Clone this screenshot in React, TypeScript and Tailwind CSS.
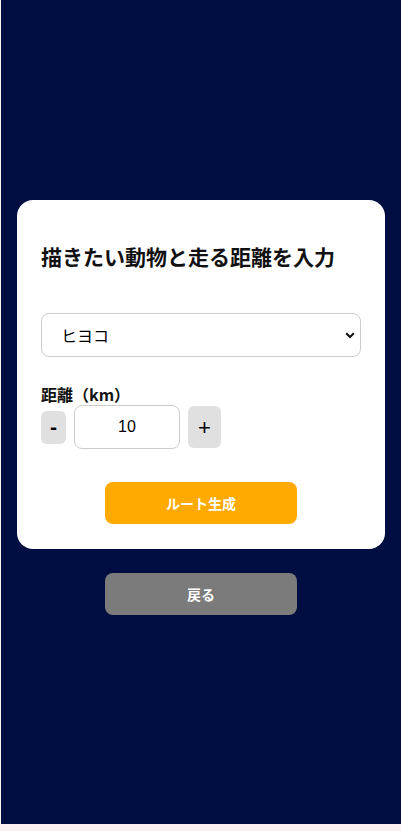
import React, { useState } from "react";

export default function App() {
  const [km, setKm] = useState(10);
  const jp = { fontFamily: '"Noto Sans CJK JP", "Noto Sans", sans-serif' };
  return (
    <div className="h-[831px] w-[401px] bg-[#fbf1f3] pl-px">
      <div className="h-[824px] w-[400px] bg-[#000d40] pt-[200px]" style={jp}>
        <div className="mx-4 rounded-2xl bg-white px-6 pt-[41px] pb-[25px]">
          <h2 className="text-[21px] leading-[30px] font-bold text-[#111]">描きたい動物と走る距離を入力</h2>
          <div className="relative mt-[42px] h-[44px] w-full">
            <select
              className="h-full w-full appearance-none rounded-lg border border-[#cccccc] bg-white pl-[19px] text-[16px] text-black outline-none"
              style={jp}
              defaultValue="ヒヨコ"
            >
              <option>ヒヨコ</option>
              <option>ネコ</option>
              <option>イヌ</option>
            </select>
            <svg
              className="pointer-events-none absolute right-[6px] top-[19px]"
              width="10"
              height="7"
              viewBox="0 0 10 7"
            >
              <path d="M1.2 1.3 L5 5 L8.8 1.3" fill="none" stroke="#111" strokeWidth="2" />
            </svg>
          </div>
          <label className="mt-[27px] block text-[16px] leading-[20px] font-bold text-[#111]">距離（km）</label>
          <div className="flex h-[46px] items-center gap-2">
            <button
              className="flex h-[33px] w-[25px] items-center justify-center rounded-md bg-[#e0e0e0] text-[21px] font-bold text-black"
              style={{ fontFamily: '"Liberation Sans", Arial, sans-serif' }}
              onClick={() => setKm(Math.max(1, km - 1))}
            >
              -
            </button>
            <input
              className="h-[44px] w-[106px] rounded-lg border border-[#cccccc] bg-white text-center text-[16px] text-black outline-none"
              style={{ fontFamily: '"Liberation Sans", Arial, sans-serif' }}
              value={km}
              onChange={(e) => setKm(Number(e.target.value) || 0)}
            />
            <button
              className="flex h-[42px] w-[33px] items-center justify-center rounded-md bg-[#e0e0e0] text-[22px] text-black"
              style={{ fontFamily: '"Liberation Sans", Arial, sans-serif' }}
              onClick={() => setKm(km + 1)}
            >
              +
            </button>
          </div>
          <button className="mx-auto mt-[32px] flex h-[42px] w-[192px] items-center justify-center rounded-lg bg-[#ffaa00] text-[14px] font-bold text-white">
            ルート生成
          </button>
        </div>
        <button className="mx-auto mt-[24px] flex h-[42px] w-[192px] items-center justify-center rounded-lg bg-[#7b7b7b] text-[14px] font-bold text-white">
          戻る
        </button>
      </div>
    </div>
  );
}
